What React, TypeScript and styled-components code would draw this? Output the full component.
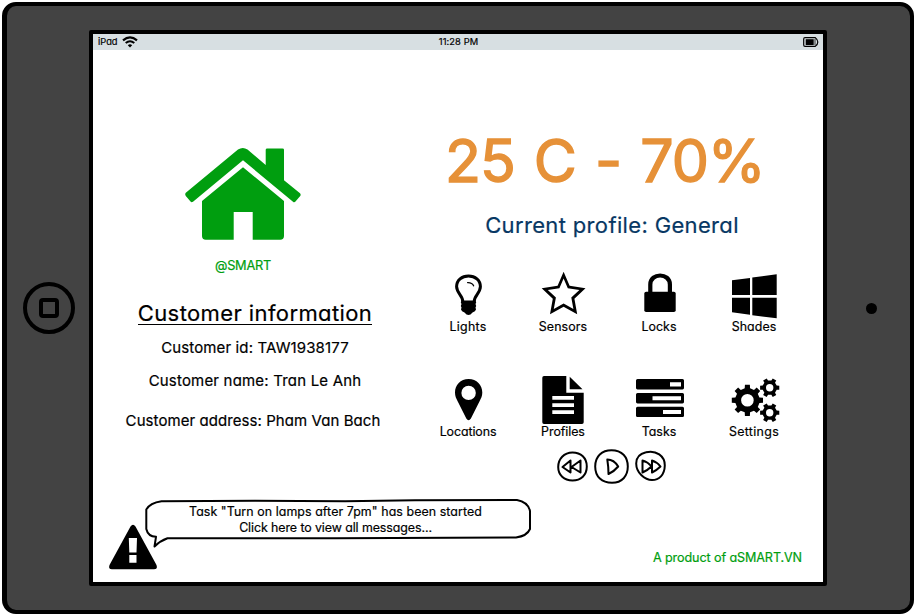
import React from "react";
import styled, { createGlobalStyle } from "styled-components";

const GlobalStyle = createGlobalStyle`
  * { box-sizing: border-box; }
  body {
    margin: 0;
    background: #fff;
    color: #000;
    font-family: "Inter", sans-serif;
    font-feature-settings: "cv11";
  }
  svg { display: block; overflow: visible; flex: none; }
`;

const Page = styled.div`
  width: 916px;
  height: 616px;
  padding: 2px;
  overflow: hidden;
`;

const Device = styled.div`
  display: flex;
  align-items: center;
  width: 912px;
  height: 612px;
  background: #434343;
  border: solid #000;
  border-width: 4px 4px 4px 5px;
  border-radius: 14px;
`;

const Bezel = styled.div<{ $width: number; $shift: number }>`
  display: flex;
  justify-content: center;
  flex: none;
  width: ${(p) => p.$width}px;
  padding-left: ${(p) => p.$shift}px;
`;

const HomeButton = styled.div`
  display: flex;
  align-items: center;
  justify-content: center;
  width: 52px;
  height: 52px;
  border: 4px solid #000;
  border-radius: 50%;
`;

const HomeSquare = styled.div`
  width: 20px;
  height: 20px;
  border: 4px solid #000;
  border-radius: 4px;
`;

const Camera = styled.div`
  width: 11px;
  height: 11px;
  border-radius: 50%;
  background: #000;
`;

const Screen = styled.div`
  display: flex;
  flex-direction: column;
  flex: none;
  width: 738px;
  height: 556px;
  border: 4px solid #000;
  border-radius: 2px;
  background: #fff;
`;

const StatusBar = styled.div`
  display: grid;
  grid-template-columns: 1fr auto 1fr;
  align-items: center;
  height: 16px;
  flex: none;
  padding: 0 4px 0 5px;
  background: #d7dfe2;
`;

const StatusSide = styled.div<{ $end?: boolean }>`
  display: flex;
  align-items: center;
  gap: 4px;
  justify-content: ${(p) => (p.$end ? "flex-end" : "flex-start")};
`;

const Text = styled.div<{
  $size: number;
  $line: number;
  $track?: number;
  $top?: number;
  $color?: string;
}>`
  font-size: ${(p) => p.$size}px;
  line-height: ${(p) => p.$line}px;
  letter-spacing: ${(p) => p.$track ?? 0}px;
  margin-top: ${(p) => p.$top ?? 0}px;
  color: ${(p) => p.$color ?? "#000"};
  -webkit-text-stroke: 0.2px currentColor;
  white-space: pre;
`;

const Reading = styled(Text)`
  align-self: flex-start;
  margin-left: 28px;
  word-spacing: 3.7px;
  -webkit-text-stroke: 1.4px currentColor;
`;

const Heading = styled(Text)`
  height: 24px;
  border-bottom: 1px solid #000;
`;

const Main = styled.div`
  display: flex;
  height: 449px;
  flex: none;
`;

const Customer = styled.section`
  display: flex;
  flex-direction: column;
  align-items: center;
  width: 324px;
  padding-top: 98px;
`;

const AddressLine = styled(Text)`
  padding-right: 4px;
`;

const Brand = styled.div`
  display: flex;
  flex-direction: column;
  align-items: center;
  padding-right: 24px;
`;

const Control = styled.section`
  display: flex;
  flex-direction: column;
  align-items: center;
  width: 390px;
  padding-top: 81px;
`;

const Tiles = styled.div`
  display: grid;
  grid-template-columns: 96px 94px 98px 92px;
  row-gap: 42px;
  width: 380px;
  margin: 33px 4px 0 0;
`;

const Tile = styled.div`
  display: flex;
  flex-direction: column;
  align-items: center;
  height: 63px;
`;

const Player = styled.div`
  display: flex;
  align-items: center;
  gap: 6px;
  margin: 10px 1px 0 0;
`;

const Footer = styled.div`
  display: flex;
  align-items: flex-start;
  height: 83px;
  padding: 0 21px 0 16px;
`;

const AlertIcon = styled.div`
  margin-top: 25px;
`;

const Bubble = styled.div`
  position: relative;
  width: 386px;
  height: 48px;
  margin-left: -12px;
  padding: 5px 5px 0 0;
  text-align: center;
`;

const BubbleOutline = styled.svg`
  position: absolute;
  left: 0;
  top: 0;
`;

const Credit = styled(Text)`
  margin-left: auto;
`;

function gear(cx: number, cy: number, teeth: number, outer: number, root: number, hole: number) {
  const step = (Math.PI * 2) / teeth;
  const pts: string[] = [];
  for (let i = 0; i < teeth; i++) {
    const a = i * step;
    [
      [-0.28, root],
      [-0.2, outer],
      [0.2, outer],
      [0.28, root],
    ].forEach(([f, r]) => {
      pts.push(`${(cx + r * Math.cos(a + f * step)).toFixed(2)} ${(cy + r * Math.sin(a + f * step)).toFixed(2)}`);
    });
  }
  return `M${pts.join("L")}ZM${cx - hole} ${cy}a${hole} ${hole} 0 1 0 ${hole * 2} 0a${hole} ${hole} 0 1 0 ${-hole * 2} 0Z`;
}

const icons: Record<string, React.ReactNode> = {
  Lights: (
    <>
      <path
        d="M18.8 30.5C18.8 24.5 12.6 22 12.6 15.6C12.6 9 17.9 4.9 24.5 4.9S36.4 9 36.4 15.6C36.4 22 30.2 24.5 30.2 30.5"
        fill="none"
        stroke="#000"
        strokeWidth="3"
      />
      <path d="M23.6 11.6C26.2 11.5 28.7 12.7 29.6 14.8" fill="none" stroke="#000" strokeWidth="1.3" strokeLinecap="round" />
      <path d="M17.4 29.6H31.6L32.2 31.5L31.5 33L32.2 35L31.5 36.5L32 38.5Q31.5 40.5 28.5 41.5Q26.5 44 24.5 44T20.5 41.5Q17.5 40.5 17 38.5L17.5 36.5L16.8 35L17.5 33L16.8 31.5Z" />
    </>
  ),
  Sensors: (
    <path
      fillRule="evenodd"
      d="M24.6 .8L30.6 14.8L46.5 17.3L35.4 27.8L38.2 43.2L24.6 35.8L11 43.2L13.8 27.8L2.7 17.3L18.6 14.8ZM24.6 7.6L20.4 17.2L8.8 18.9L16.9 26.5L14.8 38L24.6 32.6L34.4 38L32.3 26.5L40.4 18.9L28.8 17.2Z"
    />
  ),
  Locks: (
    <>
      <path d="M15.3 22V13.5C15.3 1.5 34.9 1.5 34.9 13.5V22" fill="none" stroke="#000" strokeWidth="4.2" />
      <rect x="9.3" y="20.7" width="31.4" height="20.4" rx="1.8" />
    </>
  ),
  Shades: <path d="M2 9.3L20 7V24H2ZM22.3 6.5L46.7 3.3V24H22.3ZM2 26.7H20V43.8L2 41.3ZM22.3 26.7H46.7V47.3L22.3 44.2Z" />,
  Locations: (
    <path
      fillRule="evenodd"
      d="M24.6 3C16.5 3 11 9 11 16.5C11 20 12.2 22.5 13.5 25L22.3 42.5Q24.6 46 26.9 42.5L35.7 25C37 22.5 38.3 20 38.3 16.5C38.3 9 32.7 3 24.6 3ZM24.6 9.7a7.2 7.2 0 1 1 0 14.4a7.2 7.2 0 1 1 0 -14.4Z"
    />
  ),
  Profiles: (
    <path
      fillRule="evenodd"
      d="M5 0H27.3V16.7H44.7V46.3Q44.7 48 43 48H5Q3.3 48 3.3 46.3V1.7Q3.3 0 5 0ZM30.7 .8L43.5 13.3H30.7ZM13.3 20H35V23.7H13.3ZM13.3 27.2H35V30.9H13.3ZM13.3 34.3H35V38H13.3Z"
    />
  ),
  Tasks: (
    <path
      fillRule="evenodd"
      d="M2.5 3H47.5Q49 3 49 4.5V12Q49 13.4 47.5 13.4H2.5Q1 13.4 1 12V4.5Q1 3 2.5 3ZM35 6.3V10.5H46V6.3ZM2.5 17H47.5Q49 17 49 18.5V26Q49 27.4 47.5 27.4H2.5Q1 27.4 1 26V18.5Q1 17 2.5 17ZM17.5 20.2V24.3H46V20.2ZM2.5 30.7H47.5Q49 30.7 49 32.2V39.7Q49 41.1 47.5 41.1H2.5Q1 41.1 1 39.7V32.2Q1 30.7 2.5 30.7ZM28 34V38H46V34Z"
    />
  ),
  Settings: (
    <path
      fillRule="evenodd"
      d={gear(17.4, 24.3, 8, 15.8, 12.3, 6.3) + gear(39.7, 11.7, 6, 9.8, 7.3, 3.7) + gear(39.7, 36.7, 6, 9.8, 7.3, 3.7)}
    />
  ),
};

const tiles: { name: string; track: number }[] = [
  { name: "Lights", track: 0.25 },
  { name: "Sensors", track: 0.1 },
  { name: "Locks", track: 0.0 },
  { name: "Shades", track: 0.05 },
  { name: "Locations", track: -0.08 },
  { name: "Profiles", track: -0.05 },
  { name: "Tasks", track: 0.0 },
  { name: "Settings", track: 0.35 },
];

const green = "#009e0f";

export default function App() {
  return (
    <Page>
      <GlobalStyle />
      <Device>
        <Bezel $width={82} $shift={2}>
          <HomeButton>
            <HomeSquare />
          </HomeButton>
        </Bezel>
        <Screen>
          <StatusBar>
            <StatusSide>
              <Text $size={9.3} $line={16}>iPad</Text>
              <svg width="16" height="12" viewBox="0 0 16 12" fill="none" stroke="#000">
                <path d="M1 4.3Q8 -1.5 15 4.3" strokeWidth="2.2" />
                <path d="M3.7 7Q8 3.4 12.3 7" strokeWidth="2" />
                <path d="M5.8 9.2Q8 7.4 10.2 9.2L8 11.5Z" fill="#000" stroke="none" />
              </svg>
            </StatusSide>
            <Text $size={9.3} $line={16} $track={0.1}>11:28 PM</Text>
            <StatusSide $end>
              <svg width="16" height="10" viewBox="0 0 16 10">
                <path d="M2 .7H12.3Q14.8 2.5 14.8 5T12.3 9.3H2Q.7 9.3 .7 8V2Q.7 .7 2 .7Z" fill="none" stroke="#000" strokeWidth="1.2" />
                <rect x="2.7" y="2.2" width="8" height="5.8" />
                <path d="M12 2V8" stroke="#000" strokeWidth=".8" />
              </svg>
            </StatusSide>
          </StatusBar>
          <Main>
            <Customer>
              <Brand>
                <svg width="116" height="92" viewBox="0 0 116 92" fill={green}>
                  <path d="M.8 44.8L53 1.6Q57.8 -1.6 62.5 1.6L80.7 17V1.8Q80.7 .4 82.2 .4H97.5Q99 .4 99 1.8V32.3L115 45.2Q116.2 46.5 115.2 48L110.5 53.6Q109.3 54.9 108 53.8L58 12.3L8 53.8Q6.6 54.8 5.5 53.6L.8 48Q-.4 46.2 .8 44.8Z" />
                  <path d="M58 19.3L99 53V88Q99 91.7 95.2 91.7H67.7V64H48.7V91.7H20.8Q17 91.7 17 88V53Z" />
                </svg>
                <Text $size={12.8} $line={16} $top={18} $track={-0.27} $color={green}>@SMART</Text>
              </Brand>
              <Heading $size={22} $line={24} $top={27} $track={0.4}>Customer information</Heading>
              <Text $size={15} $line={20} $top={13} $track={0.13}>Customer id: TAW1938177</Text>
              <Text $size={15} $line={20} $top={13} $track={0.19}>Customer name: Tran Le Anh</Text>
              <AddressLine $size={15} $line={20} $top={20} $track={0.07}>Customer address: Pham Van Bach</AddressLine>
            </Customer>
            <Control>
              <Reading $size={59} $line={60} $track={-1.1} $color="#e69138">25 C - 70%</Reading>
              <Text $size={22} $line={26} $top={21} $track={0.35} $color="#073763">Current profile: General</Text>
              <Tiles>
                {tiles.map(({ name, track }) => (
                  <Tile key={name}>
                    <svg width="48" height="48" viewBox="0 0 48 48">{icons[name]}</svg>
                    <Text $size={12.4} $line={15} $track={track}>{name}</Text>
                  </Tile>
                ))}
              </Tiles>
              <Player>
                <svg width="31" height="35" viewBox="0 0 31 35" fill="none" stroke="#000" strokeWidth="2" strokeLinejoin="round">
                  <path d="M15.5 3.5C24 3.5 29.8 9 29.8 17.5S24 31.5 15.5 31.5S1.2 26 1.2 18S7 3.5 15.5 3.5Z" />
                  <path d="M13.5 11.5L5.5 18L13.5 23.5ZM23.5 11.5L14.5 18L23.5 23.5Z" />
                </svg>
                <svg width="35" height="35" viewBox="0 0 35 35" fill="none" stroke="#000" strokeWidth="2" strokeLinejoin="round">
                  <path d="M17.5 1.2C28 1.2 33.8 8 33.8 17.5S28 33.8 18 33.8S1.2 28 1.2 17.5S8 1.2 17.5 1.2Z" />
                  <path d="M13.3 10.5Q20 10.5 24.2 17.5Q20.5 22 14.5 25Q14.5 18 13.3 10.5Z" />
                </svg>
                <svg width="31" height="35" viewBox="0 0 31 35" fill="none" stroke="#000" strokeWidth="2" strokeLinejoin="round">
                  <path d="M11 3.3C21 .8 30 7 29.8 16.5S24 31 17 31S1.2 24 1.2 14.5Q1.2 5.5 11 3.3Z" />
                  <path d="M7.5 11.5Q13 13 16.5 17.5Q13 21 7.5 23.5ZM17 11.5Q22 13 25.5 17.5Q22 21 17 23.5Z" />
                </svg>
              </Player>
            </Control>
          </Main>
          <Footer>
            <AlertIcon>
              <svg width="48" height="46" viewBox="0 0 48 46">
                <path
                  fillRule="evenodd"
                  d="M21.5 2.5Q24 -1 26.5 2.5L47.5 41Q49 45.3 45 45.3H3Q-1 45.3 .5 41ZM19.8 14L20.3 28.6H27.5L28 14ZM20.3 31V38.7H27.5V31Z"
                />
              </svg>
            </AlertIcon>
            <Bubble>
              <BubbleOutline width="386" height="49" viewBox="0 0 386 49" fill="none" stroke="#000" strokeWidth="2" strokeLinejoin="round">
                <path d="M1.3 10.5Q5 4 16.5 2.3L110 1.8L200 2.3L270 1.3L372 1Q383 3 385 12V30Q382 37 371 38.5L190 39.3L22.5 39.3Q15 42 9.5 47.5L11 37.8Q3 37.5 1.3 30Z" />
              </BubbleOutline>
              <Text $size={12.4} $line={16} $track={0.08}>Task "Turn on lamps after 7pm" has been started</Text>
              <Text $size={12.4} $line={16} $track={-0.08}>Click here to view all messages...</Text>
            </Bubble>
            <Credit $size={12.6} $line={16} $top={51} $track={-0.1} $color={green}>A product of aSMART.VN</Credit>
          </Footer>
        </Screen>
        <Bezel $width={83} $shift={6}>
          <Camera />
        </Bezel>
      </Device>
    </Page>
  );
}
